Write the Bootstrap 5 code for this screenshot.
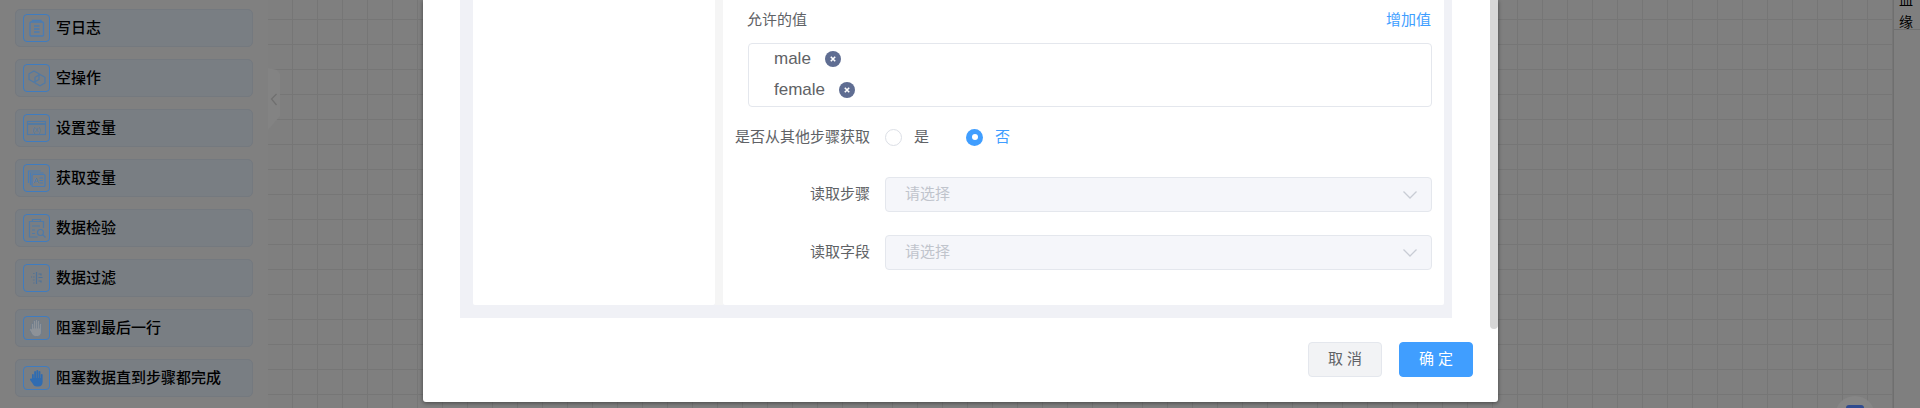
<!DOCTYPE html>
<html lang="zh-CN">
<head>
<meta charset="utf-8">
<title>流程编辑</title>
<link rel="stylesheet" href="https://cdn.jsdelivr.net/npm/bootstrap@5.3.0/dist/css/bootstrap.min.css">
<style>
html,body{height:408px;overflow:hidden;background:#808080;}
body{font-family:"Liberation Sans","Noto Sans CJK SC",sans-serif;font-size:15px;color:#606266;}
.stage{height:408px;position:relative;overflow:hidden;}
.tool-panel{width:268px;flex:none;padding:9px 15px 0;background:#808080;gap:12px;}
.tool-item{height:38px;background:#797e83;border:1px solid #74797f;border-radius:5px;padding-left:7px;gap:6px;}
.tool-icon{width:27px;height:28px;flex:none;border:1px solid #3f7cc0;border-radius:4px;}
.tool-icon.low{height:24px;}
.tool-icon svg{display:block;width:25px;height:100%;}
.tool-name{font-size:15px;color:#000;font-weight:500;white-space:nowrap;}
.grid-canvas{flex:1;background-color:#7f7f7f;
  background-image:linear-gradient(#767676 1px,transparent 1px),linear-gradient(90deg,#767676 1px,transparent 1px);
  background-size:25px 25px;background-position:24px 19px;}
.side-tab{width:27px;flex:none;background:#7f7f7f;border-left:1px solid #6f6f6f;}
.side-cell{height:41px;border-bottom:1px solid #6f6f6f;margin-top:-1px;}
.side-text{font-size:14px;line-height:22px;color:#000;width:14px;margin:-11px 0 0 5px;}
.collapse-tab{position:absolute;left:268px;top:68px;width:13px;height:62px;}
.fab-halo{position:absolute;left:1835px;top:396px;width:40px;height:40px;border-radius:50%;background:#868686;}
.fab-core{position:absolute;left:11px;top:9px;width:18px;height:18px;border-radius:3px;background:#2f4b8f;}
.dialog{position:absolute;left:423px;top:0;width:1075px;height:402px;background:#fff;border:0;border-radius:0 0 3px 3px;box-shadow:0 1px 4px rgba(0,0,0,.45);overflow:hidden;}
.dialog-scrollbar{position:absolute;right:0;top:0;width:8px;height:329px;background:#d7d7d7;border-radius:0 0 4px 4px;}
.dialog-body{margin-left:37px;width:992px;height:318px;background:#f0f1f6;padding:0 8px 13px 13px;flex:none;}
.nav-col{width:242px;flex:none;background:#fff;border-radius:0 0 2px 2px;}
.col-gap{width:8px;flex:none;background:#f5f5f5;}
.form-col{flex:1;background:#fff;border-radius:0 0 2px 2px;padding-top:10px;}
.head-row{height:20px;margin:0 13px 13px 24px;}
.add-link{font-size:15px;color:#409eff;text-decoration:none;}
.value-box{height:64px;margin:0 12px 0 25px;padding-left:25px;border:1px solid #e4e7ed;border-radius:4px;}
.value-tag{height:31px;font-size:17px;gap:14px;color:#606266;}
.value-tag:first-child{margin-top:-1px;}
.tag-x{width:16px;height:16px;flex:none;border-radius:50%;background:#5f6d92;}
.tag-x svg{display:block;width:16px;height:16px;}
.field-row{margin-right:12px;gap:15px;}
.field-label{width:147px;flex:none;text-align:right;white-space:nowrap;}
.radio-row{height:30px;margin-top:15px;}
.radio-item{font-size:15px;gap:12px;margin:0;}
.radio-item+.radio-item{margin-left:22px;}
.radio-dot{width:17px;height:17px;flex:none;border-radius:50%;border:1px solid #dcdfe6;background:#fff;}
.radio-dot.on{border:0;background:#409eff;}
.radio-dot.on::after{content:"";width:6px;height:6px;border-radius:50%;background:#fff;}
.radio-on{color:#409eff;}
.select-row{margin-top:25px;}
.select-row+.select-row{margin-top:23px;}
.select-box{flex:1;height:35px;background:#f5f6fa;border:1px solid #e4e7ed;border-radius:4px;padding:0 14px 0 19px;color:#c0c4cc;}
.select-box svg{width:14px;height:8px;}
.dialog-foot{padding:24px 25px 0 0;gap:17px;border:0;}
.foot-btn{width:74px;height:35px;padding:0;font-size:15px;border-radius:4px;}
.foot-cancel{background:#f2f3f5;border:1px solid #e4e7ed;color:#606266;}
.foot-ok{background:#409eff;border:1px solid #409eff;color:#fff;}
</style>
</head>
<body>
<div class="stage d-flex">
  <aside class="tool-panel d-flex flex-column">
    <div class="tool-item d-flex align-items-center">
      <span class="tool-icon"><svg viewBox="0 0 25 26" fill="none" stroke="#4a7cb4" stroke-width="1.300"><rect x="6" y="7" width="13.500" height="14" rx="1"/><path d="M8.500 7V5.500h8.500V7M10 11h5.500M10 14h5.500M10 17h5.500"/></svg></span>
      <span class="tool-name">写日志</span>
    </div>
    <div class="tool-item d-flex align-items-center">
      <span class="tool-icon"><svg viewBox="0 0 25 26" fill="none" stroke="#4f7aa8" stroke-width="1.200"><path d="M10 6l5 2.800v5.600L10 17.200l-5-2.800V8.800z"/><path d="M16 9.500l5 2.800v5.600l-5 2.800-5-2.800v-5.600z"/></svg></span>
      <span class="tool-name">空操作</span>
    </div>
    <div class="tool-item d-flex align-items-center">
      <span class="tool-icon"><svg viewBox="0 0 25 26" fill="none" stroke="#4f7aa8" stroke-width="1.200"><rect x="3.500" y="6.500" width="18" height="13"/><path d="M3.500 9h18" stroke-width="1.800"/><text x="12.500" y="17" font-size="7" font-family="Liberation Sans" fill="#4f7aa8" stroke="none" text-anchor="middle">(x)</text></svg></span>
      <span class="tool-name">设置变量</span>
    </div>
    <div class="tool-item d-flex align-items-center">
      <span class="tool-icon"><svg viewBox="0 0 25 26" fill="none" stroke="#4a7cb4" stroke-width="1.200"><path d="M4.500 18V6h12"/><path d="M6.500 20V8h13"/><rect x="8" y="9.500" width="13" height="12" rx="1"/><text x="12" y="18" font-size="7.500" font-family="Liberation Sans" fill="#4a7cb4" stroke="none" text-anchor="middle">A</text><path d="M15.500 13h3.500M15.500 15.500h3.500M15.500 18h3.500"/></svg></span>
      <span class="tool-name">获取变量</span>
    </div>
    <div class="tool-item d-flex align-items-center">
      <span class="tool-icon"><svg viewBox="0 0 25 26" fill="none" stroke="#4f7aa8" stroke-width="1.200"><path d="M19.500 13V6.500h-14V22h8"/><path d="M8.500 6.500V4.500h8v2M8 11h8M8 15h3M8 18.500h3"/><circle cx="16.500" cy="17.500" r="3"/><path d="M18.700 19.700l2.800 2.800"/></svg></span>
      <span class="tool-name">数据检验</span>
    </div>
    <div class="tool-item d-flex align-items-center">
      <span class="tool-icon"><svg viewBox="0 0 25 26" fill="none" stroke="#4f7297" stroke-width="1.200"><path d="M12.500 7v12"/><path d="M14.500 9h2.500v1.500M14.500 12.500h4M14.500 16h2.500v1.500"/><path d="M10.500 8.500h-1.500M10.500 12h-3.500M10.500 15h-2.500M10.500 18h-1.500" stroke-dasharray="1.200 1.200"/></svg></span>
      <span class="tool-name">数据过滤</span>
    </div>
    <div class="tool-item d-flex align-items-center">
      <span class="tool-icon low"><svg viewBox="0 0 25 22" fill="none"><path d="M7.500 12V7.500a1 1 0 0 1 2 0V4.500a1 1 0 0 1 2 0V3.500a1 1 0 0 1 2 0V4.500a1 1 0 0 1 2 0V7.500a1 1 0 0 1 2 0V15c0 2.500-1.500 4.500-4 4.500h-2c-2 0-3-1-4-3l-2-3.500c-.5-1 1-2 2-1z" fill="#8d9298" stroke="#717e8c" stroke-width="1"/><path d="M9.500 7.500v4M11.500 4.500v7M13.500 3.500v8M15.500 4.500v7" stroke="#717e8c" stroke-width=".8"/></svg></span>
      <span class="tool-name">阻塞到最后一行</span>
    </div>
    <div class="tool-item d-flex align-items-center">
      <span class="tool-icon low"><svg viewBox="0 0 25 22" fill="#2f6cb2"><path d="M8 12V7.500a1 1 0 0 1 1.800 0V11h.4V4.500a1 1 0 0 1 1.800 0V11h.4V3.500a1 1 0 0 1 1.800 0V11h.4V4.500a1 1 0 0 1 1.800 0V11h.4V7.500a1 1 0 0 1 1.800 0V15c0 2.500-1.500 4.500-4 4.500h-2c-2 0-3-1-4-3l-2.500-3.500c-.5-1 1-2 2-1z"/></svg></span>
      <span class="tool-name">阻塞数据直到步骤都完成</span>
    </div>
  </aside>
  <main class="grid-canvas"></main>
  <aside class="side-tab">
    <div class="side-cell"><div class="side-text">血缘</div></div>
  </aside>

  <div class="collapse-tab"><svg width="13" height="62" viewBox="0 0 13 62"><path d="M0 0l9 2 3 4v42L0 62z" fill="#838383"/><path d="M8.500 26l-5 5 5 6" fill="none" stroke="#6f6f6f" stroke-width="1.200"/></svg></div>
  <div class="fab-halo"><span class="fab-core"></span></div>

  <section class="dialog modal-content d-flex flex-column">
    <div class="dialog-body d-flex">
      <div class="nav-col"></div>
      <div class="col-gap"></div>
      <div class="form-col">
        <div class="head-row d-flex justify-content-between align-items-center">
          <span>允许的值</span>
          <a class="add-link" href="#">增加值</a>
        </div>
        <div class="value-box">
          <div class="value-tag d-flex align-items-center"><span>male</span><span class="tag-x"><svg viewBox="0 0 16 16"><path d="M5.800 5.800l4.400 4.400M10.200 5.800l-4.400 4.400" stroke="#fff" stroke-width="1.600"/></svg></span></div>
          <div class="value-tag d-flex align-items-center"><span>female</span><span class="tag-x"><svg viewBox="0 0 16 16"><path d="M5.800 5.800l4.400 4.400M10.200 5.800l-4.400 4.400" stroke="#fff" stroke-width="1.600"/></svg></span></div>
        </div>
        <div class="field-row radio-row d-flex align-items-center">
          <span class="field-label">是否从其他步骤获取</span>
          <label class="radio-item d-flex align-items-center"><span class="radio-dot"></span><span>是</span></label>
          <label class="radio-item radio-on d-flex align-items-center"><span class="radio-dot on d-flex align-items-center justify-content-center"></span><span>否</span></label>
        </div>
        <div class="field-row select-row d-flex align-items-center">
          <span class="field-label">读取步骤</span>
          <div class="select-box d-flex align-items-center justify-content-between"><span>请选择</span><svg viewBox="0 0 14 8" fill="none" stroke="#c8ccd4" stroke-width="1.300"><path d="M.5.500L7 7l6.500-6.500"/></svg></div>
        </div>
        <div class="field-row select-row d-flex align-items-center">
          <span class="field-label">读取字段</span>
          <div class="select-box d-flex align-items-center justify-content-between"><span>请选择</span><svg viewBox="0 0 14 8" fill="none" stroke="#c8ccd4" stroke-width="1.300"><path d="M.5.500L7 7l6.500-6.500"/></svg></div>
        </div>
      </div>
    </div>
    <div class="dialog-foot d-flex justify-content-end">
      <button type="button" class="btn foot-btn foot-cancel">取 消</button>
      <button type="button" class="btn foot-btn foot-ok">确 定</button>
    </div>
    <div class="dialog-scrollbar"></div>
  </section>
</div>
<script src="https://cdn.jsdelivr.net/npm/bootstrap@5.3.0/dist/js/bootstrap.bundle.min.js"></script>
</body>
</html>
